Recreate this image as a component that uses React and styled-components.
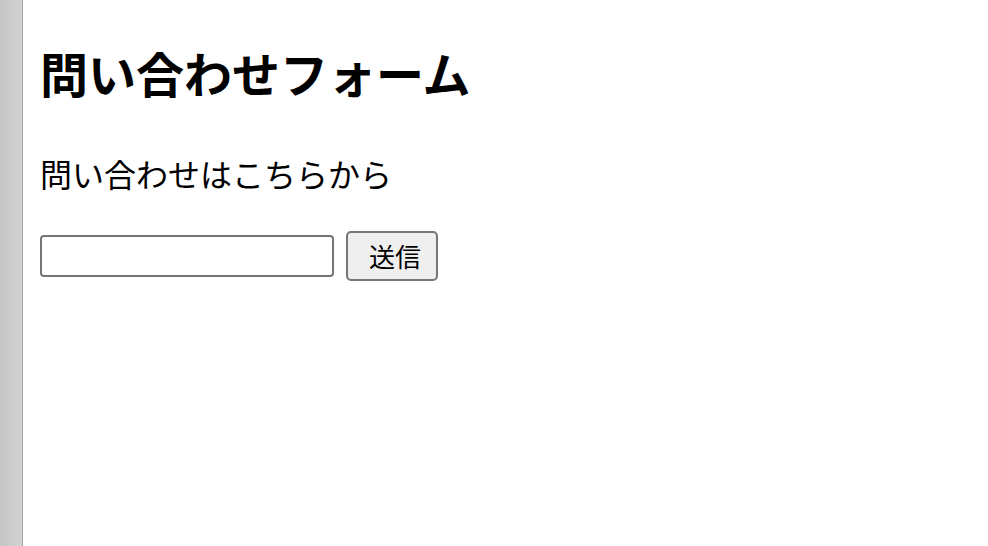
import React from 'react';
import styled, { createGlobalStyle } from 'styled-components';

const GlobalStyle = createGlobalStyle`
  html, body {
    margin: 0;
    padding: 0;
    background: #ffffff;
  }
  body {
    font-family: "Noto Sans CJK JP", "Noto Sans", sans-serif;
    color: #000000;
  }
`;

const Page = styled.div`
  display: flex;
  min-height: 546px;
`;

const SideBar = styled.div`
  flex: 0 0 22px;
  background: linear-gradient(to right, #c6c6c6, #d2d2d2);
  border-right: 1px solid #a3a3a3;
`;

const Main = styled.main`
  flex: 1;
  padding: 44px 0 0 17px;
`;

const Title = styled.h1`
  margin: 0;
  font-size: 48px;
  line-height: 56px;
  font-weight: 700;
`;

const Lead = styled.p`
  margin: 53px 0 0;
  font-size: 32px;
  line-height: 40px;
  font-weight: 400;
`;

const Form = styled.form`
  display: flex;
  align-items: center;
  gap: 12px;
  margin-top: 38px;
`;

const TextInput = styled.input`
  box-sizing: border-box;
  width: 294px;
  height: 42px;
  margin: 0;
  padding: 0 6px;
  border: 2px solid #767676;
  border-radius: 4px;
  background: #ffffff;
  font-size: 24px;
  font-family: inherit;
`;

const SubmitButton = styled.button`
  box-sizing: border-box;
  width: 92px;
  height: 50px;
  margin: 0;
  padding: 0 0 0 6px;
  border: 2px solid #767676;
  border-radius: 5px;
  background: #efefef;
  color: #000000;
  font-family: inherit;
  font-size: 26px;
  line-height: 1;
`;

export default function App() {
    return (
        <>
            <GlobalStyle />
            <Page>
                <SideBar />
                <Main>
                    <Title>問い合わせフォーム</Title>
                    <Lead>問い合わせはこちらから</Lead>
                    <Form onSubmit={e => e.preventDefault()}>
                        <TextInput type="text" />
                        <SubmitButton type="submit">送信</SubmitButton>
                    </Form>
                </Main>
            </Page>
        </>
    );
}
